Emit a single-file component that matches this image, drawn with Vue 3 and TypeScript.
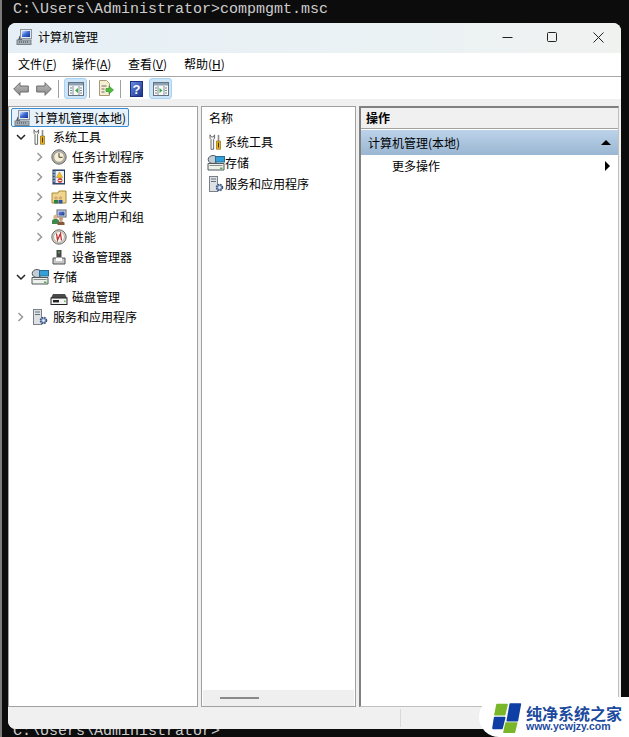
<script setup lang="ts">
interface TreeRow { label: string; icon: string; depth: number; arrow: '' | 'open' | 'closed' }
const menus = [
  { t: '文件(', k: 'F' }, { t: '操作(', k: 'A' }, { t: '查看(', k: 'V' }, { t: '帮助(', k: 'H' },
]
const rows: TreeRow[] = [
  { label: '系统工具', icon: 'tools', depth: 1, arrow: 'open' },
  { label: '任务计划程序', icon: 'clock', depth: 2, arrow: 'closed' },
  { label: '事件查看器', icon: 'event', depth: 2, arrow: 'closed' },
  { label: '共享文件夹', icon: 'share', depth: 2, arrow: 'closed' },
  { label: '本地用户和组', icon: 'users', depth: 2, arrow: 'closed' },
  { label: '性能', icon: 'perf', depth: 2, arrow: 'closed' },
  { label: '设备管理器', icon: 'device', depth: 2, arrow: '' },
  { label: '存储', icon: 'storage', depth: 1, arrow: 'open' },
  { label: '磁盘管理', icon: 'disk', depth: 2, arrow: '' },
  { label: '服务和应用程序', icon: 'service', depth: 1, arrow: 'closed' },
]
const listRows = [
  { label: '系统工具', icon: 'tools' },
  { label: '存储', icon: 'storage' },
  { label: '服务和应用程序', icon: 'service' },
]
</script>

<template>
  <div class="page">
    <svg class="defs" width="0" height="0">
      <defs>
        <linearGradient id="gBlue" x1="0" y1="0" x2="1" y2="1"><stop offset="0" stop-color="#dbe8fb"/><stop offset=".45" stop-color="#3f6fd8"/><stop offset="1" stop-color="#0f2f94"/></linearGradient>
        <linearGradient id="gHelp" x1="0" y1="0" x2="1" y2="1"><stop offset="0" stop-color="#6f8fe0"/><stop offset="1" stop-color="#14308c"/></linearGradient>
        <linearGradient id="gArrow" x1="0" y1="0" x2="0" y2="1"><stop offset="0" stop-color="#bcbcbc"/><stop offset="1" stop-color="#8a8a8a"/></linearGradient>
        <symbol id="i-computer" viewBox="0 0 16 16">
          <path d="M3.500 7 2 11h4V5z" fill="#4a5460"/>
          <rect x="4.500" y=".5" width="11" height="9" fill="#e4e8ee" stroke="#8b94a0"/>
          <rect x="6" y="2" width="8" height="6" fill="url(#gBlue)"/>
          <rect x="1" y="11" width="14" height="4.500" fill="#a4adb4" stroke="#7a838a"/>
          <path d="M3 13h1M5 13h1M7 13h1M9 13h1M11 13h1" stroke="#3c4248"/>
        </symbol>
        <symbol id="i-tools" viewBox="0 0 18 16">
          <path d="M3 .8v3.400l1 1.200V15.300h2.600V5.400l1-1.200V.8L6.400 3H4.600z" fill="#f8f8f8" stroke="#5c5c5c" stroke-width=".9"/>
          <rect x="10.700" y="1" width="1.600" height="6" fill="#8c8c8c"/>
          <path d="M9.500 7h4v8.300h-4z" fill="#f0b41a" stroke="#7a5c08" stroke-width=".6"/>
          <rect x="11" y="8.500" width="1" height="5" fill="#4a3404"/>
        </symbol>
        <symbol id="i-clock" viewBox="0 0 16 16">
          <circle cx="8" cy="8" r="7.200" fill="#b0aea8" stroke="#6b6b6b"/>
          <circle cx="8" cy="8" r="5.200" fill="#f7edd0" stroke="#8a8a8a" stroke-width=".6"/>
          <path d="M8 4v4.300h3.500" fill="none" stroke="#444"/>
        </symbol>
        <symbol id="i-event" viewBox="0 0 16 16">
          <rect x="2" y="1" width="11.500" height="14" fill="#3f5f92" stroke="#23365a"/>
          <rect x="4.500" y="2" width="8.500" height="12" fill="#eef0f4"/>
          <path d="M2 3h2M2 6h2M2 9h2M2 12h2" stroke="#c4cede"/>
          <path d="M8.500 3 11.500 8.500h-6z" fill="#f5c21c" stroke="#a8800c" stroke-width=".5"/>
          <circle cx="9" cy="11.500" r="2.400" fill="#c8423a"/>
          <rect x="7.500" y="11" width="3" height="1" fill="#fff"/>
        </symbol>
        <symbol id="i-share" viewBox="0 0 16 16">
          <path d="M1 4h6l1-2h7v12H1z" fill="#f0d68c" stroke="#a68a3c"/>
          <circle cx="5" cy="9" r="1.800" fill="#d8a878"/>
          <rect x="3" y="11" width="4" height="3.500" fill="#2f7f3f"/>
          <circle cx="9.500" cy="9" r="1.800" fill="#d8a878"/>
          <rect x="7.500" y="11" width="4" height="3.500" fill="#2f56a8"/>
        </symbol>
        <symbol id="i-users" viewBox="0 0 16 16">
          <rect x="6" y="1" width="9" height="7" fill="#dfe3ea" stroke="#5a6270"/>
          <rect x="7.500" y="2.500" width="6" height="4" fill="url(#gHelp)"/>
          <circle cx="4.500" cy="8" r="2.200" fill="#dcb088"/>
          <path d="M1 15v-3c0-1.500 1.500-2 3.500-2s3.500.5 3.500 2v3z" fill="#3e8a4e"/>
          <circle cx="10" cy="10" r="2" fill="#c99a70"/>
          <path d="M6.500 16v-2c0-1 1.500-1.500 3.500-1.500s3.500.5 3.500 1.500v2z" fill="#885a3a"/>
        </symbol>
        <symbol id="i-perf" viewBox="0 0 16 16">
          <circle cx="8" cy="8" r="7.200" fill="#d8d6c8" stroke="#6b6b6b"/>
          <circle cx="8" cy="8" r="5.400" fill="#fbfbf6" stroke="#8a8a8a" stroke-width=".6"/>
          <path d="M5.500 4.500 6.500 11l3-6.500 1 7" fill="none" stroke="#c42e2e" stroke-width="1.300"/>
        </symbol>
        <symbol id="i-device" viewBox="0 0 16 16">
          <rect x="5.500" y="1" width="5" height="7" fill="#474747"/>
          <rect x="7.200" y="2.500" width="1.600" height="1.800" fill="#5dbb5d"/>
          <path d="M2 9h12v6H2z" fill="#c8c8c8" stroke="#555"/>
          <rect x="5" y="9" width="6" height="3" fill="#fff"/>
        </symbol>
        <symbol id="i-storage" viewBox="0 0 18 16">
          <ellipse cx="6" cy="4.500" rx="4.800" ry="4" fill="#c4ccd4" stroke="#4c5a60"/>
          <rect x="8.500" y="1.500" width="9" height="5.500" fill="#35a0d8" stroke="#2a6a94"/>
          <path d="M1 8.500h16v6.500H1z" fill="#eef0ec" stroke="#4f5a5a"/>
          <rect x="2.500" y="10" width="13" height="1" fill="#8a9090"/>
          <rect x="13" y="12.500" width="2.500" height="1.500" fill="#55b04a"/>
        </symbol>
        <symbol id="i-disk" viewBox="0 0 18 16">
          <path d="M3 5h12l2 4H1z" fill="#4a4a4a"/>
          <rect x="1" y="9" width="16" height="6.500" fill="#f4f4f4" stroke="#222"/>
          <rect x="3" y="11" width="6" height="2.400" fill="#222"/>
          <rect x="14" y="11.500" width="1.600" height="1.600" fill="#62c25a"/>
        </symbol>
        <symbol id="i-service" viewBox="0 0 16 16">
          <rect x="1.500" y=".5" width="8" height="15" fill="#dde0e4" stroke="#7a7f88"/>
          <rect x="3" y="2.500" width="5" height="1" fill="#667078"/>
          <rect x="3" y="5" width="5" height="1" fill="#667078"/>
          <circle cx="11.500" cy="11.500" r="3" fill="#7f9cc8" stroke="#3f5478" stroke-width="1.600" stroke-dasharray="1.500 .9"/>
          <circle cx="11.500" cy="11.500" r="1.200" fill="#eef2f8"/>
        </symbol>
      </defs>
    </svg>

    <div class="term-top">C:\Users\Administrator&gt;compmgmt.msc</div>

    <div class="middle">
      <div class="win">
        <header class="titlebar">
          <svg class="ticon" width="16" height="16"><use href="#i-computer"/></svg>
          <span class="ttext">计算机管理</span>
          <div class="caption">
            <svg width="11" height="11" viewBox="0 0 11 11"><path d="M.5 5.500h10" stroke="#222"/></svg>
            <svg width="11" height="11" viewBox="0 0 11 11"><rect x=".5" y=".5" width="9" height="9" rx="1" fill="none" stroke="#222"/></svg>
            <svg class="close" width="11" height="11" viewBox="0 0 11 11"><path d="M.5.500l10 10M10.500.500l-10 10" stroke="#222"/></svg>
          </div>
        </header>

        <nav class="menubar">
          <span v-for="m in menus" :key="m.k" class="menu">{{ m.t }}<u>{{ m.k }}</u>)</span>
        </nav>

        <div class="toolbar">
          <svg class="nav" width="16" height="14" viewBox="0 0 16 14"><path d="M.7 7 7 .7V4h8.300v6H7v3.300z" fill="url(#gArrow)" stroke="#6c6c6c"/></svg>
          <svg class="nav next" width="16" height="14" viewBox="0 0 16 14"><path d="M15.300 7 9 .7V4H.7v6H9v3.300z" fill="url(#gArrow)" stroke="#6c6c6c"/></svg>
          <i class="sep s1"></i>
          <span class="active">
            <svg width="16" height="14" viewBox="0 0 16 14"><rect x=".5" y=".5" width="15" height="13" fill="#f6f8fa" stroke="#66727e"/><rect x="1" y="1" width="14" height="2.500" fill="#8ea2b6"/><path d="M5 4v9M11 4v9" stroke="#8a9298"/><path d="M10 6v5L7 8.500z" fill="#3caa3c"/><path d="M2 6h2M2 8.500h2M2 11h2M12 6h2M12 8.500h2M12 11h2" stroke="#7c868e"/></svg>
          </span>
          <i class="sep s2"></i>
          <svg class="export" width="16" height="17" viewBox="0 0 16 17"><path d="M1.500.5h7l3 3v12h-10z" fill="#f7eed2" stroke="#a79a78"/><path d="M3.500 6h5M3.500 9h3M3.500 12h3" stroke="#6a6a6a"/><path d="M8 8.500h3V6l4.500 4-4.500 4v-2.500H8z" fill="#4ebc3a" stroke="#2e8a28" stroke-width=".6"/></svg>
          <i class="sep s3"></i>
          <svg class="help" width="13" height="16" viewBox="0 0 13 16"><rect x=".5" y=".5" width="12" height="15" fill="url(#gHelp)" stroke="#1a2f80"/><text x="6.500" y="13" font-size="13" font-weight="700" text-anchor="middle" fill="#fff" font-family="Liberation Sans">?</text></svg>
          <span class="active">
            <svg width="16" height="14" viewBox="0 0 16 14"><rect x=".5" y=".5" width="15" height="13" fill="#f6f8fa" stroke="#66727e"/><rect x="1" y="1" width="14" height="2.500" fill="#8ea2b6"/><path d="M5 4v9M11 4v9" stroke="#8a9298"/><path d="M6.500 6v5l3-2.500z" fill="#3caa3c"/><path d="M2 6h2M2 8.500h2M2 11h2M12 6h2M12 8.500h2M12 11h2" stroke="#7c868e"/></svg>
          </span>
        </div>

        <div class="panes">
          <section class="pane tree">
            <div class="root">
              <svg width="16" height="16"><use href="#i-computer"/></svg>
              <span>计算机管理(本地)</span>
            </div>
            <div v-for="r in rows" :key="r.label" class="row" :class="'d' + r.depth">
              <span class="arrow">
                <svg v-if="r.arrow === 'open'" width="10" height="10" viewBox="0 0 10 10"><path d="M1 3l4 4 4-4" fill="none" stroke="#222" stroke-width="1.500"/></svg>
                <svg v-else-if="r.arrow === 'closed'" width="10" height="10" viewBox="0 0 10 10"><path d="M2.500 1l4 4-4 4" fill="none" stroke="#999" stroke-width="1.500"/></svg>
              </span>
              <svg class="ri" width="18" height="16"><use :href="'#i-' + r.icon"/></svg>
              <span class="rl">{{ r.label }}</span>
            </div>
          </section>

          <section class="pane list">
            <div class="lhead">名称</div>
            <div v-for="r in listRows" :key="r.label" class="lrow">
              <svg width="18" height="16"><use :href="'#i-' + r.icon"/></svg>
              <span>{{ r.label }}</span>
            </div>
            <div class="hscroll"><i></i></div>
          </section>

          <section class="pane actions">
            <div class="ahead">操作</div>
            <div class="asel"><span>计算机管理(本地)</span><i class="up"></i></div>
            <div class="amore"><span>更多操作</span><i class="right"></i></div>
          </section>
        </div>

        <footer class="status"><i></i></footer>
      </div>
    </div>

    <div class="term-bottom"><div>C:\Users\Administrator&gt;</div></div>

    <div class="mark">
      <svg class="logo" width="30" height="30" viewBox="0 0 90 90">
        <g stroke-linejoin="round" stroke-width="5">
          <path d="M15 5h30l-7 30H9z" fill="#7ab62a" stroke="#7ab62a"/>
          <path d="M55 3h30l-9 50H46z" fill="#0e3fa4" stroke="#0e3fa4"/>
          <path d="M8 44h30l-8 32H3z" fill="#0e3fa4" stroke="#0e3fa4"/>
          <path d="M42 60h32l-7 28H36z" fill="#7ab62a" stroke="#7ab62a"/>
        </g>
      </svg>
      <div class="mtext">
        <strong>纯净系统之家</strong>
        <small>www.ycwjzy.com</small>
      </div>
    </div>
  </div>
</template>

<style>
html, body { margin: 0; background: #0c0c0c; }
</style>

<style scoped>
.page {
  position: relative;
  width: 629px;
  height: 737px;
  box-sizing: border-box;
  border-left: 2px solid #7a7a7a;
  overflow: hidden;
  background: #0c0c0c;
  display: flex;
  flex-direction: column;
  font-family: "Noto Sans CJK SC", "Noto Sans", sans-serif;
  font-size: 12px;
  color: #000;
}
.defs { position: absolute; }
.term-top {
  height: 23px;
  flex: none;
  padding-left: 11px;
  font: 15px/20px "Liberation Mono", monospace;
  color: #cccccc;
}
.middle { height: 706px; flex: none; padding: 0 8px 0 6px; display: flex; }
.win {
  flex: 1;
  display: flex;
  flex-direction: column;
  background: #f0f0f0;
  border-radius: 8px 8px 0 8px;
  overflow: hidden;
}
.titlebar {
  height: 30px;
  flex: none;
  box-sizing: border-box;
  padding: 0 0 2px 8px;
  display: flex;
  align-items: center;
  background: linear-gradient(90deg, #e6eff6 0%, #eaf2f4 60%, #f0f2f0 100%);
}
.ticon { margin-right: 6px; }
.ttext { line-height: 26px; margin-top: -1px; }
.caption { margin-left: auto; display: flex; gap: 34px; padding-right: 17px; }
.close { margin-left: 1px; }
.menubar {
  height: 23px;
  flex: none;
  box-sizing: content-box;
  display: flex;
  align-items: center;
  padding: 0 0 0 10px;
  background: #fff;
  border-bottom: 1px solid #a8a8a8;
}
.menu { width: 56px; flex: none; line-height: 21px; margin-top: -2px; }
.menu:first-child { width: 54px; }
.menu u { text-decoration: underline; }
.toolbar {
  height: 22px;
  flex: none;
  box-sizing: border-box;
  padding: 1px 0 0 5px;
  display: flex;
  align-items: center;
  background: #fff;
}
.nav { flex: none; }
.next { margin-left: 7px; }
.sep { width: 1px; height: 18px; background: #a0a0a0; flex: none; }
.s1 { margin: 0 5px 0 6px; }
.s2 { margin: 0 8px 0 2px; }
.s3 { margin: 0 9px 0 6px; }
.export { flex: none; }
.help { flex: none; margin-right: 6px; }
.active {
  width: 23px;
  height: 21px;
  flex: none;
  display: flex;
  align-items: center;
  justify-content: center;
  background: #cce4f7;
  border: 1px solid #a8d2f4;
  border-radius: 3px;
  box-sizing: border-box;
}
.panes {
  flex: 1;
  min-height: 0;
  display: grid;
  grid-template-columns: 190px 155px 260px;
  column-gap: 3px;
  padding-top: 7px;
  background: #f0f0f0;
}
.pane {
  background: #fff;
  border: 1px solid #a0a0a0;
  box-sizing: border-box;
  position: relative;
}
.tree { padding-top: 1px; }
.root {
  height: 19px;
  width: 118px;
  margin-left: 2px;
  display: flex;
  align-items: center;
  gap: 4px;
  box-sizing: border-box;
  padding-left: 2px;
  background: #e6f2fb;
  border: 1px solid #3a8ad0;
  border-radius: 2px;
  line-height: 17px;
  white-space: nowrap;
}
.row { height: 20px; display: flex; align-items: center; white-space: nowrap; }
.d1 { padding-left: 7px; }
.d2 { padding-left: 26px; }
.arrow { width: 10px; height: 10px; margin-right: 5px; flex: none; display: block; line-height: 0; }
.ri { flex: none; margin-right: 1px; }
.rl { line-height: 20px; margin-left: 3px; }
.list { display: flex; flex-direction: column; }
.lhead { height: 24px; line-height: 22px; padding-left: 7px; }
.lrow { height: 21px; display: flex; align-items: center; padding-left: 5px; line-height: 21px; }
.hscroll {
  margin: auto 1px 0;
  height: 16px;
  background: #efefef;
  display: flex;
  align-items: center;
  padding-left: 17px;
}
.hscroll i { width: 39px; height: 2px; background: #8a8a8a; }
.actions { border-color: #808080 #c0c0c0 #c0c0c0 #808080; border-width: 2px 1px 1px 2px; }
.ahead {
  height: 21px;
  line-height: 20px;
  padding-left: 5px;
  font-weight: 700;
  background: #f0f0f0;
  border-bottom: 1px solid #a0a0a0;
  box-sizing: border-box;
}
.asel {
  height: 25px;
  margin-top: 1px;
  display: flex;
  align-items: center;
  justify-content: space-between;
  padding: 0 7px 0 7px;
  background: linear-gradient(#bcd3ea, #9ab6d2);
}
.amore {
  height: 21px;
  display: flex;
  align-items: center;
  justify-content: space-between;
  padding: 0 8px 0 31px;
}
.up { width: 0; height: 0; border: 5px solid transparent; border-top: 0; border-bottom: 5px solid #000; }
.right { width: 0; height: 0; border: 5px solid transparent; border-right: 0; border-left: 5px solid #000; }
.status {
  height: 22px;
  flex: none;
  background: #f0f0f0;
  position: relative;
}
.status i { position: absolute; left: 392px; top: 2px; bottom: 2px; width: 1px; background: #d8d8d8; }
.term-bottom { height: 8px; overflow: hidden; padding-left: 11px; }
.term-bottom div { margin-top: -6px; font: 15px/17px "Liberation Mono", monospace; color: #cccccc; }
.mark {
  position: absolute;
  right: 0;
  bottom: 0;
  width: 150px;
  height: 40px;
  box-sizing: border-box;
  background: #fff;
  border-radius: 22px 0 0 22px;
  display: flex;
  align-items: flex-start;
  padding: 6px 0 0 13px;
  gap: 4px;
}
.logo { flex: none; }
.mtext { display: flex; flex-direction: column; color: #1c4a9e; }
.mtext strong { font-size: 16px; line-height: 20px; font-weight: 700; white-space: nowrap; }
.mtext small { margin-top: -2px; font: 700 10.500px/10px "Liberation Sans", sans-serif; }
</style>
